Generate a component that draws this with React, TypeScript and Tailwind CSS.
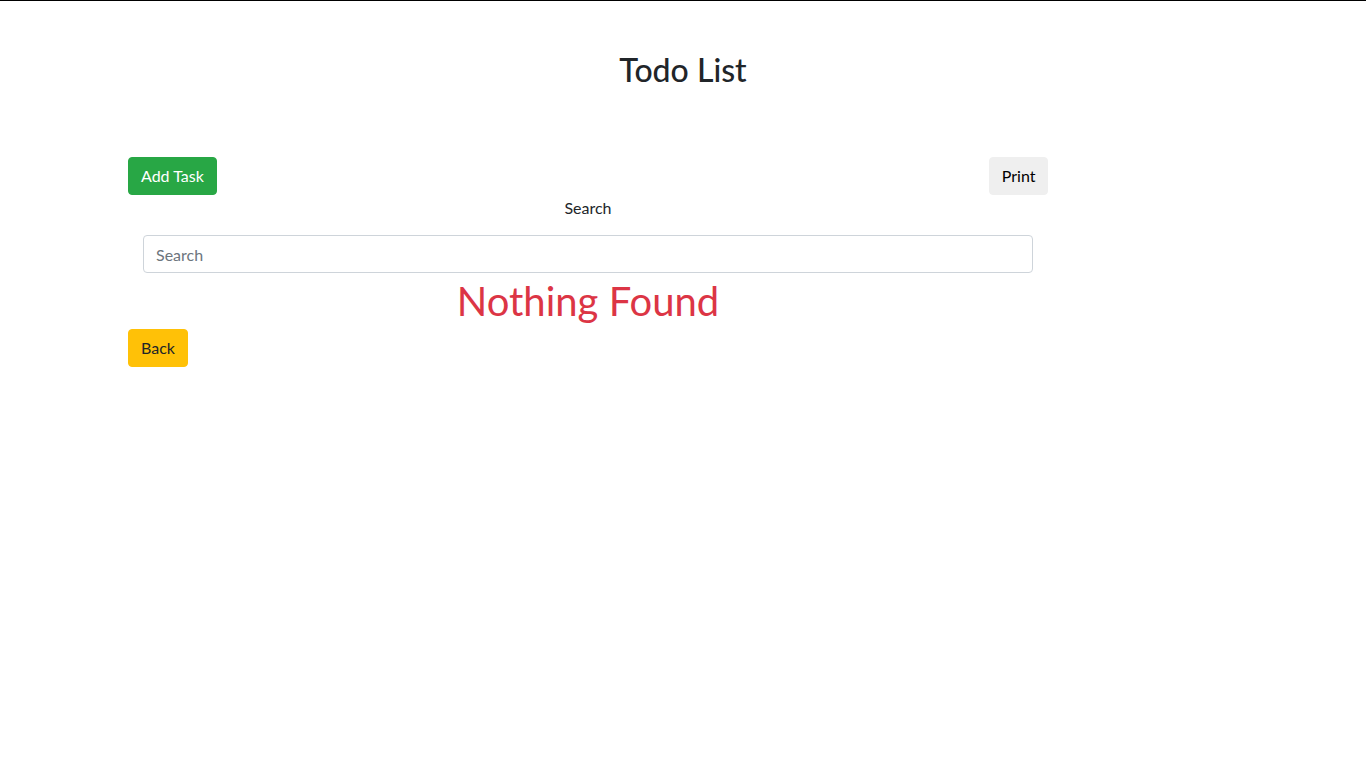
import React from "react";

export default function App() {
  return (
    <div className="min-h-screen bg-white border-t border-black text-[#212529] font-['Lato','Noto_Sans',sans-serif] text-[16px] leading-[24px]">
      <h2 className="text-center text-[32px] leading-[1.2] font-medium pt-[50px] mb-[68px]">Todo List</h2>
      <div className="w-[1140px] mx-auto px-[15px]">
        <div className="w-[920px]">
          <div className="flex justify-between">
            <button className="bg-[#28a745] text-white border border-[#28a745] rounded-[4px] px-3 py-[6px] leading-[24px]">Add Task</button>
            <button className="bg-[#efefef] text-black border border-[#efefef] rounded-[4px] px-[11.5px] py-[6px] leading-[24px]">Print</button>
          </div>
          <div className="text-center mt-[1px]">Search</div>
          <div className="mx-[15px] mt-[15px]">
            <input
              placeholder="Search"
              className="w-full h-[38px] border border-[#ced4da] rounded-[4px] px-3 text-[16px] text-[#495057] placeholder:text-[#6c757d] outline-none"
            />
          </div>
          <h1 className="text-center text-[40px] leading-[1.2] font-normal text-[#dc3545] mt-[4px]">Nothing Found</h1>
          <button className="mt-[4px] bg-[#ffc107] text-[#212529] border border-[#ffc107] rounded-[4px] px-3 py-[6px] leading-[24px]">Back</button>
        </div>
      </div>
    </div>
  );
}
